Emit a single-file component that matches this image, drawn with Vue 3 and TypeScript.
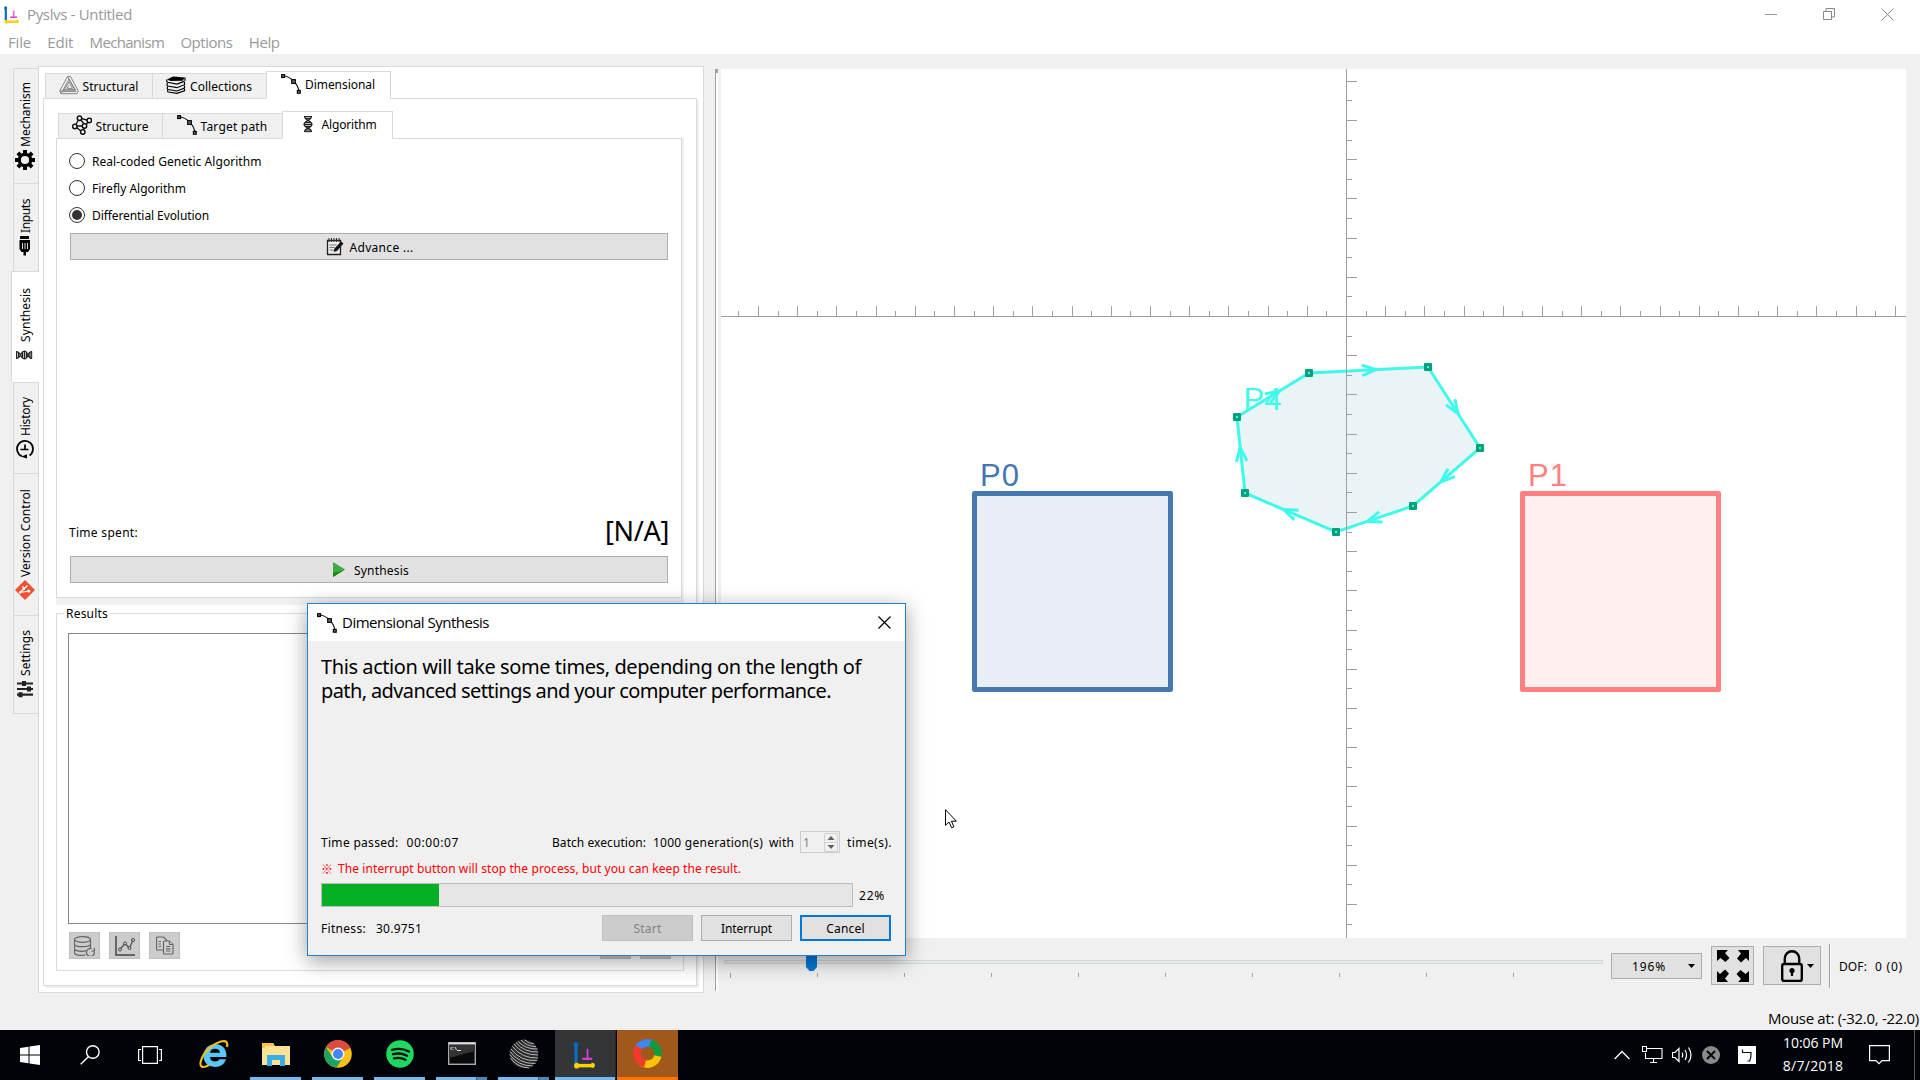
<script setup lang="ts">
import type { Directive } from 'vue'

interface Pt { x: number; y: number }

// Spreads a label's letters so that it takes the given number of pixels along its line.
const vFit: Directive<HTMLElement, number> = {
  mounted(el, binding) {
    const box = el.getBoundingClientRect()
    const length = Math.max(box.width, box.height)
    const count = (el.textContent ?? '').length
    if (count > 0) el.style.letterSpacing = `${(binding.value - length) / count}px`
  },
}

const menus = [
  { label: 'File', width: 23 },
  { label: 'Edit', width: 26 },
  { label: 'Mechanism', width: 74.5 },
  { label: 'Options', width: 52 },
  { label: 'Help', width: 31 },
]

const sideTabs = [
  { label: 'Mechanism', icon: 'gear', height: 115, width: 65 },
  { label: 'Inputs', icon: 'motor', height: 88, width: 34 },
  { label: 'Synthesis', icon: 'dna', height: 111, width: 54, active: true },
  { label: 'History', icon: 'history', height: 91, width: 39 },
  { label: 'Version Control', icon: 'git', height: 142, width: 88 },
  { label: 'Settings', icon: 'sliders', height: 99, width: 46 },
]

const topTabs = [
  { label: 'Structural', icon: 'triangle', tab: 107, width: 56 },
  { label: 'Collections', icon: 'books', tab: 114, width: 62 },
  { label: 'Dimensional', icon: 'path', tab: 125, width: 70, active: true },
]

const subTabs = [
  { label: 'Structure', icon: 'graph', tab: 104, width: 53 },
  { label: 'Target path', icon: 'path', tab: 120, width: 67 },
  { label: 'Algorithm', icon: 'dna', tab: 111, width: 55, active: true },
]

const radios = [
  { label: 'Real-coded Genetic Algorithm', width: 169.5, on: false },
  { label: 'Firefly Algorithm', width: 94, on: false },
  { label: 'Differential Evolution', width: 117, on: true },
]

const axis: Pt = { x: 1346 - 721, y: 316 - 69 }
const step = 19.6
const range = (a: number, b: number) => Array.from({ length: b - a + 1 }, (_, i) => a + i)
const xTicks = range(-31, 28).map(i => ({ p: Math.round(axis.x + i * step) + 0.5, len: i % 2 ? 5 : 10 }))
const yTicks = range(-31, 12).map(i => ({ p: Math.round(axis.y - i * step) + 0.5, len: i % 2 ? 5 : 10 }))

const path: Pt[] = [
  [1237, 417], [1309, 373], [1428, 367], [1480, 448], [1413, 506], [1336, 532], [1245, 493],
].map(([x, y]) => ({ x: x - 721, y: y - 69 }))

const outline = path.map(p => `${p.x},${p.y}`).join(' ')

const arrows = path.map((a, i) => {
  const b = path[(i + 1) % path.length]
  const t = Math.atan2(b.y - a.y, b.x - a.x)
  const tip = { x: (a.x + b.x) / 2 + 7.5 * Math.cos(t), y: (a.y + b.y) / 2 + 7.5 * Math.sin(t) }
  const arm = (d: number) =>
    `${(tip.x - 15 * Math.cos(t + d)).toFixed(1)},${(tip.y - 15 * Math.sin(t + d)).toFixed(1)}`
  return `${arm(0.36)} ${tip.x.toFixed(1)},${tip.y.toFixed(1)} ${arm(-0.36)}`
})

const sliderTicks = range(0, 9).map(i => Math.round(6 + i * 87) + 0.5)
const progress = 22
</script>

<template>
  <svg class="defs" width="0" height="0">
    <symbol id="i-path" viewBox="0 0 20 20">
      <path d="M2 2C9 2 17 9 18 18" fill="none" stroke="#111" stroke-width="1.1" />
      <g fill="#777" stroke="#000" stroke-width="1.2">
        <rect x=".7" y=".7" width="2.8" height="2.8" /><rect x="10.7" y="5.7" width="3.6" height="3.6" /><rect x="16.4" y="16.4" width="2.8" height="2.8" />
      </g>
    </symbol>
    <symbol id="i-triangle" viewBox="0 0 20 20">
      <g fill="none" stroke="#777" stroke-width=".9" stroke-linejoin="round">
        <path d="M8.5 1.5h3L19.3 16l-1.5 2.7H2.2L.7 16z" /><path d="M10 4l6.800 12.200H4.500L10 6.800l3.600 6.600H8.200L10 10.200" /><path d="M8.500 1.500l7.600 13.200H6.200M2.200 18.700L10 4M.7 16h16.500" />
      </g>
    </symbol>
    <symbol id="i-books" viewBox="0 0 20 20">
      <path d="M1 4.500L7 1.500l12 1-2.500 3.200-12 .3z" fill="#000" />
      <g fill="none" stroke="#000" stroke-width="1.200">
        <path d="M1 4.500c-.6 1.500-.3 2.300.5 2.800l9.500 1.800 7.500-3M19 2.800v3" /><path d="M1.500 8c-.8 1.500-.6 2.600.3 3l9 1.700 7.700-3V7" /><path d="M1.800 11.500c-1 1.500-.6 2.500.2 3l9 1.500 7.500-3v-2.500" /><path d="M2 15c-.8 1-.3 1.800.3 2l8.700 1.300 7.500-2.600V14" />
      </g>
    </symbol>
    <symbol id="i-graph" viewBox="0 0 20 20">
      <g fill="none" stroke="#111" stroke-width="1.300">
        <path d="M7.500 3.200L17 5.500M7 4L3 11M8 4l5 6M16 7l-3 4-2 5M4 12l6 5M5 11h7" /><g fill="#fff" stroke-width="1.500"><circle cx="7.500" cy="3.200" r="2.200" /><circle cx="17.300" cy="5.500" r="2.200" /><circle cx="2.800" cy="11.500" r="2.200" /><circle cx="12.500" cy="11" r="2.200" /><circle cx="10.800" cy="17" r="2.200" /></g>
      </g>
    </symbol>
    <symbol id="i-dna" viewBox="0 0 20 20">
      <path d="M6.500 2h7v2.500L11.500 7l2.300 2v3l-2.300 2 2 2.500V18h-7v-1.500l2-2.500-2.300-2V9l2.300-2-2-2.500z" fill="#bbb" />
      <g fill="none" stroke="#222" stroke-width="1.200">
        <path d="M6.500 2C6.500 7 14 6.500 14 10.500S6.500 13 6.500 18M13.500 2c0 5-7.500 4.500-7.500 8.500S13.500 13 13.500 18" /><path d="M6.500 2.500h7M7 4.500h6M7 8.500h6M6 10.500h8M7 12.500h6M7 16h6M6.500 17.700h7" stroke-width="1" />
      </g>
    </symbol>
    <symbol id="i-gear" viewBox="0 0 20 20">
      <g stroke="#000"><circle cx="10" cy="10" r="5.700" fill="none" stroke-width="3.200" /><path d="M10 0v4M10 16v4M0 10h4M16 10h4M2.900 2.900l2.900 2.900M14.200 14.200l2.900 2.900M2.900 17.100l2.900-2.900M14.200 5.800l2.900-2.900" stroke-width="4" /></g>
    </symbol>
    <symbol id="i-motor" viewBox="0 0 20 20">
      <path d="M5 0h9v3H5zM4.500 4h10.500v9l-2 3H6.500l-2-3zM8.500 16h2.500v3.500H8.500z" fill="#000" /><path d="M7.500 7v6M10 7v6M12.500 7v6" stroke="#ddd" stroke-width="1" />
    </symbol>
    <symbol id="i-history" viewBox="0 0 20 20">
      <path d="M14.500 16.500A8 8 0 1 0 7 17.300M10 5.500v5h-4.500M10.500 10.500h3" fill="none" stroke="#000" stroke-width="1.700" /><path d="M6 17.800l6-2.500v4.200z" fill="#000" />
    </symbol>
    <symbol id="i-git" viewBox="0 0 20 20">
      <path d="M10 0l10 10-10 10L0 10z" fill="#f05133" /><path d="M5 12.500l9-1.500M5 12.500L12.500 5.500M9 9L7.500 6" fill="none" stroke="#fff" stroke-width="1.200" /><circle cx="5" cy="12.500" r="1.200" fill="#fff" /><circle cx="13.800" cy="11" r="1.600" fill="#fff" /><circle cx="8.800" cy="8.800" r="1.400" fill="#fff" />
    </symbol>
    <symbol id="i-sliders" viewBox="0 0 20 20">
      <path d="M2 4.500h16M2 10h16M2 15.700h16" stroke="#222" stroke-width="2.200" /><path d="M9 2v5M14 7.500v5M5.500 13.200v5" stroke="#222" stroke-width="4" />
    </symbol>
    <symbol id="i-pyslvs" viewBox="0 0 20 20">
      <path d="M3.500 2v14" stroke="#0a6cc4" stroke-width="2.800" /><circle cx="3.300" cy="2.200" r="2" fill="#0a6cc4" /><path d="M4 17.500h15" stroke="#fdd100" stroke-width="2.600" /><circle cx="4" cy="17.500" r="2.200" fill="#fdd100" /><circle cx="18" cy="17.300" r="1.900" fill="#fdd100" /><path d="M13.500 5v7.500M9 12.500h8.500" stroke="#d63fd6" stroke-width="1.500" />
    </symbol>
  </svg>

  <div class="screen">
    <header class="head">
      <div class="title-row">
        <svg class="app-icon" width="16" height="18" viewBox="0 0 20 20" preserveAspectRatio="none"><use href="#i-pyslvs" /></svg>
        <span v-fit="105" class="segoe">Pyslvs - Untitled</span>
        <div class="win-buttons">
          <svg width="12" height="12"><path d="M0 6.500h12" stroke="#999" /></svg>
          <svg width="12" height="12"><path d="M.5 3.500h8v8h-8zM3 3V.5h8.500V9H9" fill="none" stroke="#888" /></svg>
          <svg width="13" height="13"><path d="M.5.5l12 12M12.500.5l-12 12" stroke="#888" /></svg>
        </div>
      </div>
      <nav class="menu-row">
        <span v-for="m in menus" :key="m.label" v-fit="m.width" class="segoe">{{ m.label }}</span>
      </nav>
    </header>

    <main class="work">
      <div class="side-tabs">
        <div v-for="t in sideTabs" :key="t.label" class="side-tab" :class="{ active: t.active }" :style="{ height: t.height + 'px' }">
          <span v-fit="t.width" class="vertical">{{ t.label }}</span>
          <svg class="tab-icon" :class="{ turned: t.icon === 'dna' }" viewBox="0 0 20 20"><use :href="'#i-' + t.icon" /></svg>
        </div>
      </div>

      <section class="pane outer">
        <div class="tabs">
          <div v-for="t in topTabs" :key="t.label" class="tab" :class="{ active: t.active }" :style="{ width: t.tab + 'px' }">
            <svg class="tab-icon" viewBox="0 0 20 20"><use :href="'#i-' + t.icon" /></svg><span v-fit="t.width">{{ t.label }}</span>
          </div>
        </div>
        <div class="pane middle">
          <div class="tabs">
            <div v-for="t in subTabs" :key="t.label" class="tab" :class="{ active: t.active }" :style="{ width: t.tab + 'px' }">
              <svg class="tab-icon" viewBox="0 0 20 20"><use :href="'#i-' + t.icon" /></svg><span v-fit="t.width">{{ t.label }}</span>
            </div>
          </div>
          <div class="pane algorithm">
            <div v-for="r in radios" :key="r.label" class="radio-row">
              <i class="radio" :class="{ on: r.on }"></i><span v-fit="r.width">{{ r.label }}</span>
            </div>
            <div class="wide-button advance">
              <svg width="18" height="18" viewBox="0 0 18 18"><path d="M1.500 2.500h13v14h-13z" fill="#eee" stroke="#222" stroke-width="1.300" /><path d="M3 0v4M5.500 0v4M8 0v4M10.500 0v4M13 0v4" stroke="#333" /><path d="M3.500 7h7M3.500 9.500h5M3.500 12h4" stroke="#777" /><path d="M7.500 14l1-3.500L15 3.500l2.500 2-6.500 7.500z" fill="#111" /></svg>
              <span v-fit="64">Advance ...</span>
            </div>
            <div class="time-row"><span v-fit="69">Time spent:</span><span v-fit="64" class="elapsed">[N/A]</span></div>
            <div class="wide-button run-button">
              <svg width="12" height="15"><path d="M0 0v15l12-7.500z" fill="#3faa3f" /><path d="M0 15V11q7-1 12-3.500z" fill="#0a8c0a" /></svg>
              <span v-fit="55">Synthesis</span>
            </div>
          </div>
          <div class="band"></div>
          <fieldset class="results">
            <legend><span v-fit="42">Results</span></legend>
            <div class="list"></div>
            <div class="actions">
              <i class="tool"><svg width="21" height="20" viewBox="0 0 21 20"><g fill="none" stroke="#666" stroke-width="1.200"><ellipse cx="8.500" cy="3.500" rx="8" ry="2.800" /><path d="M.5 3.500v13c0 3 8 3.500 11 2.200M16.500 3.500v9M.5 8c0 3.500 16 3.500 16 0M.5 12.500c0 3 9 3.500 11.500 2" /><path d="M20 14.500a4 4 0 1 1-2.500-2M20.300 12v3h-3" /></g></svg></i>
              <i class="tool"><svg width="20" height="20" viewBox="0 0 20 20"><path d="M1 0v19h19" fill="none" stroke="#444" stroke-width="1.500" /><path d="M5 13.500l5-6 4.500 4.500 3.500-8" fill="none" stroke="#555" stroke-width="1.300" /><g fill="#ccc" stroke="#444"><circle cx="5" cy="13.500" r="1.500" /><circle cx="10" cy="7.500" r="1.500" /><circle cx="14.500" cy="12" r="1.500" /><circle cx="18" cy="4" r="1.500" /></g></svg></i>
              <i class="tool"><svg width="18" height="19" viewBox="0 0 18 19"><g fill="#d0d0d0" stroke="#666" stroke-width="1.200"><path d="M1.500 1h6l3 3v10h-9q-1 0-1-1V2q0-1 1-1z" /><path d="M8.500 5h5l3.500 3.500V17q0 1-1 1H8.500q-1 0-1-1V6q0-1 1-1z" /><path d="M13.500 5v3.500H17M2.500 5.500H5M2.500 8H5M2.500 10.500H5M10 10.500h4.500M10 12.800h4.500M10 15h4.500" /></g></svg></i>
              <i class="tool far"></i><i class="tool"></i>
            </div>
          </fieldset>
        </div>
      </section>

      <div class="splitter"><i></i></div>

      <section class="view">
        <svg class="canvas" width="1185" height="869">
          <g stroke="#a0a0a4" stroke-width="1">
            <path :d="`M0 ${axis.y + 0.5}H1185M${axis.x + 0.5} 0V869`" />
            <path v-for="t in xTicks" :key="'x' + t.p" :d="`M${t.p} ${axis.y}v${-t.len}`" />
            <path v-for="t in yTicks" :key="'y' + t.p" :d="`M${axis.x + 1} ${t.p}h${t.len}`" />
          </g>
          <rect x="253.500" y="424.500" width="196" height="196" fill="#e8edf6" stroke="#4478ae" stroke-width="5" stroke-linejoin="round" />
          <text x="259" y="417" class="mark" fill="#4478ae" textLength="39">P0</text>
          <rect x="801.500" y="424.500" width="196" height="196" fill="#ffefef" stroke="#ff8080" stroke-width="5" stroke-linejoin="round" />
          <text x="807" y="417" class="mark" fill="#ff8080" textLength="39">P1</text>
          <polygon :points="outline" fill="#e8f4f5" stroke="#40f9ea" stroke-width="3" />
          <path d="M625.500 296V461" stroke="#a0a0a4" />
          <path v-for="t in yTicks.filter(k => k.p > 296 && k.p < 461)" :key="'p' + t.p" :d="`M626 ${t.p}h${t.len}`" stroke="#a0a0a4" />
          <polyline v-for="a in arrows" :key="a" :points="a" fill="none" stroke="#40f9ea" stroke-width="3" />
          <g v-for="p in path" :key="p.x">
            <rect :x="p.x - 4" :y="p.y - 4" width="8" height="8" rx="1" fill="#04a27a" /><rect :x="p.x - 1" :y="p.y - 1" width="2" height="2" fill="#40f9ea" />
          </g>
          <text x="522.500" y="341" class="mark" fill="#40f9ea" textLength="38">P4</text>
        </svg>
        <div class="controls">
          <svg class="slider" width="880" height="55">
            <rect x=".5" y="22.500" width="878" height="3" fill="#e7eaea" stroke="#d6d9d9" />
            <path v-for="(t, i) in sliderTicks" :key="t" :d="`M${t} 35v${i ? 4 : 5}`" stroke="#a5a597" />
            <path d="M82 10h11v19l-3.500 4h-4L82 29z" fill="#0078d7" />
          </svg>
          <div class="box percent"><span v-fit="34">196%</span><svg width="7" height="4"><path d="M0 0h7L3.500 4z" /></svg></div>
          <div class="box fit-view">
            <svg width="32" height="32" viewBox="0 0 32 32"><path v-for="r in [0, 90, 180, 270]" :key="r" :transform="`rotate(${r} 16 16)`" d="M0 0h11L8 3l4.500 5L8.500 12 3.500 8 0 11z" /></svg>
          </div>
          <div class="box lock">
            <svg width="22" height="32" viewBox="0 0 22 32"><rect x="1.200" y="14" width="19.600" height="17" rx="2" fill="none" stroke="#000" stroke-width="2.400" /><path d="M3.800 14V8.500a7.200 7.200 0 0 1 14.400 0V14" fill="none" stroke="#000" stroke-width="2.400" /><circle cx="11" cy="20.500" r="2.600" /><path d="M11 20v6" stroke="#000" stroke-width="2.200" /></svg>
            <svg class="lock-arrow" width="7" height="4"><path d="M0 0h7L3.500 4z" /></svg>
          </div>
          <div class="divider"></div>
          <span v-fit="28">DOF:</span><span v-fit="28" class="dof">0 (0)</span>
        </div>
      </section>
    </main>

    <div class="status"><span v-fit="151" class="segoe">Mouse at: (-32.0, -22.0)</span></div>

    <footer class="taskbar">
      <svg class="start" width="20" height="20"><path d="M0 3l8.500-1.200v7.700H0zM9.500 1.600L20 0v9.500H9.500zM0 10.500h8.500v7.700L0 17zM9.500 10.500H20V20L9.500 18.400z" fill="#fff" /></svg>
      <svg class="search" width="20" height="20"><circle cx="12.800" cy="7" r="6.300" fill="none" stroke="#fff" stroke-width="1.400" /><path d="M8.300 11.700L.7 19.300" stroke="#fff" stroke-width="1.400" /></svg>
      <svg class="tasks" width="24" height="20"><path d="M4.600 1.600h14.800v16.800H4.600zM3 4.500H.6v11H3M21 4.500h2.400v11H21" fill="none" stroke="#fff" stroke-width="1.200" /></svg>
      <div class="apps">
        <div class="app">
          <svg width="30" height="30" viewBox="0 0 30 30"><path fill-rule="evenodd" d="M27.500 18H11q.5 4.500 5 4.500 3.200 0 4.500-2.200h6.500Q24.500 28 16 28 4.500 27 4.500 16.500 5.500 5.500 16 5q11.500.5 11.500 13zM11 13.800h10q-.5-4-5-4-4.200 0-5 4z" fill="#5ac8f5" /><path d="M28 8q1.500-7.500-6-5.500Q12 5.500 5 15-.5 25 2.500 27.500 5 29 10 26" fill="none" stroke="#f5bd1c" stroke-width="2.200" /></svg>
        </div>
        <div class="app run">
          <svg width="28" height="24" viewBox="0 0 28 24"><path d="M0 1h11l2 3h15v19H0z" fill="#ffe293" /><path d="M0 1h11l1.500 3H3v2H0z" fill="#f5c445" /><path d="M5 24V13h18v11h-5v-6h-8v6z" fill="#38b0e6" /></svg>
        </div>
        <div class="app run">
          <svg width="28" height="28" viewBox="0 0 28 28"><circle cx="14" cy="14" r="13.800" fill="#fbc116" /><path d="M14 14L2 7A13.800 13.800 0 0 1 26.500 8z" fill="#dd4b3e" /><path d="M2 7A13.800 13.800 0 0 0 12.500 27.700L19 17 8.500 17z" fill="#1da462" /><circle cx="14" cy="14" r="6.500" fill="#f4f4f4" /><circle cx="14" cy="14" r="5" fill="#4587f3" /></svg>
        </div>
        <div class="app run">
          <svg width="28" height="28" viewBox="0 0 28 28"><circle cx="14" cy="14" r="13.800" fill="#1fd862" /><path d="M6 9.800q9-2.500 17 1.700M7 14.200q7.500-2 14 1.500M8 18.400q6-1.500 11.500 1.400" fill="none" stroke="#00120a" stroke-width="2.300" stroke-linecap="round" /></svg>
        </div>
        <div class="app run stacked">
          <svg width="28" height="23" viewBox="0 0 28 23"><rect x=".7" y=".7" width="26.600" height="21.600" fill="#0a0a0a" stroke="#aaa" stroke-width="1.400" /><path d="M1 1.500h26" stroke="#ddd" stroke-width="2" /><path d="M1 16L27 9V3H1z" fill="#333" /><path d="M3 5v3M5 5v1M5 7v1M7 5l1.500 3M9 8.500h4" stroke="#ddd" /></svg>
        </div>
        <div class="app run stacked">
          <svg width="30" height="30" viewBox="0 0 30 30"><circle cx="15" cy="15" r="14.500" fill="#2a2a2a" /><g fill="none" stroke="#c8c8c8" stroke-width=".9"><path d="M5 5q8 11 24 11M3.500 7.500q9 12 25.500 11.500M2 10q9 12.500 26 11.500M7 3.500q8 10 22 9.500M9 2.500q8 8 19.500 7.500M12 1q6 6.500 15 6.500M15.500.8q4 4 9.500 4M1 12.500q9 12.500 25.500 12M.8 15.500q8 11.500 23 11.500M1.500 19q6 9 18.500 10" /></g></svg>
        </div>
        <div class="app run pyslvs"><svg width="23" height="27" viewBox="0 0 20 20" preserveAspectRatio="none"><use href="#i-pyslvs" /></svg></div>
        <div class="app run orange">
          <svg width="29" height="29" viewBox="0 0 29 29"><g fill="none" stroke-width="7.500"><path d="M4.200 12A10.500 10.500 0 0 1 21 6.200" stroke="#4285f4" /><path d="M17 4.300A10.500 10.500 0 0 1 22.800 21" stroke="#0f9d3c" /><path d="M24.800 17A10.500 10.500 0 0 1 8 22.800" stroke="#fdc208" /><path d="M12 24.700A10.500 10.500 0 0 1 6.200 8.200" stroke="#f23a2c" /></g></svg>
        </div>
      </div>
      <div class="tray">
        <svg width="16" height="10"><path d="M.6 9L8 1.500 15.400 9" fill="none" stroke="#fff" stroke-width="1.300" /></svg>
        <svg class="net" width="21" height="18"><path d="M5 2.500h15v10H3.500V7M8 16.500h7M11.500 12.500v4M.5.5h4v5h-4z" fill="none" stroke="#fff" stroke-width="1.100" /></svg>
        <svg class="vol" width="21" height="18"><path d="M.5 6.500H3l4-4v13l-4-4H.5zM10 6.500q1.500 2.500 0 5M13 4q3 5 0 10M16.500 1.500q5 7.500 0 15" fill="none" stroke="#fff" stroke-width="1.200" /></svg>
        <svg class="off" width="18" height="18"><circle cx="9" cy="9" r="9" fill="#8a8a8a" /><path d="M5 5l8 8M13 5l-8 8" stroke="#000" stroke-width="1.800" /></svg>
        <svg class="ime" width="18" height="18"><path d="M0 0h18v18H0z" fill="#fff" /><path d="M4.500 3.500V7M4.500 6.500H13q.3 5-1.300 8.500H9.500" fill="none" stroke="#111" stroke-width="1.200" /></svg>
        <div class="clock"><span v-fit="60">10:06 PM</span><span v-fit="60.500">8/7/2018</span></div>
        <svg class="note" width="21" height="20"><path d="M.6.600h19.800v15H13l-3 3-3-3H.6z" fill="none" stroke="#fff" stroke-width="1.200" /></svg>
        <div class="peek"></div>
      </div>
    </footer>

    <div class="dialog">
      <div class="dialog-title">
        <svg width="20" height="20" viewBox="0 0 20 20"><use href="#i-path" /></svg>
        <span v-fit="147" class="segoe">Dimensional Synthesis</span>
        <svg class="close" width="13" height="13"><path d="M.5.5l12 12M12.500.5l-12 12" stroke="#000" stroke-width="1.200" /></svg>
      </div>
      <div class="dialog-body">
        <div class="message">
          <span v-fit="540">This action will take some times, depending on the length of</span>
          <span v-fit="510">path, advanced settings and your computer performance.</span>
        </div>
        <div class="line batch">
          <span v-fit="77.500">Time passed:</span><span v-fit="52.500" class="passed">00:00:07</span>
          <span v-fit="94" class="push">Batch execution:</span><span v-fit="110" class="generations">1000 generation(s)</span><span v-fit="25">with</span>
          <div class="spin"><span>1</span><svg width="14" height="19"><path d="M.5.5h13v18H.5zM0 9.500h14" fill="none" stroke="#d2d2d2" /><path d="M3.500 7h7L7 3zM3.500 12h7L7 16z" fill="#606060" /></svg></div>
          <span v-fit="45">time(s).</span>
        </div>
        <div class="line warn"><span class="cjk">※</span><span v-fit="403">The interrupt button will stop the process, but you can keep the result.</span></div>
        <div class="line bar-row">
          <div class="bar"><i :style="{ width: progress + '%' }"></i></div><span v-fit="26">22%</span>
        </div>
        <div class="line foot">
          <span v-fit="45">Fitness:</span><span v-fit="46" class="fitness">30.9751</span>
          <div class="btn disabled push"><span v-fit="28">Start</span></div>
          <div class="btn"><span v-fit="51">Interrupt</span></div>
          <div class="btn primary"><span v-fit="38.500">Cancel</span></div>
        </div>
      </div>
    </div>

    <svg class="cursor" width="13" height="20"><path d="M.5.700v15.600l3.500-3.300 2.600 5.800 2.300-1L6.400 12.200h5z" fill="#fff" stroke="#000" /></svg>
  </div>
</template>

<style>
body { margin: 0; background: #f0f0f0; }
</style>

<style scoped>
.defs { position: absolute; }
.screen { position: relative; width: 1920px; height: 1080px; overflow: hidden; display: flex; flex-direction: column; background: #f0f0f0; color: #000; font: 12px/16px "Noto Sans", "Noto Sans CJK TC", sans-serif; }
.screen * { box-sizing: border-box; }
.screen svg { display: block; flex: none; }
.screen span { white-space: nowrap; flex: none; }
.segoe { font: 15px/20px "Open Sans", sans-serif; }
.tab span, .radio-row span, .wide-button span, .line span, .controls span { padding-top: 2px; }

.head { height: 54px; background: #fff; color: #999; flex: none; }
.title-row { display: flex; align-items: center; height: 29px; padding-left: 3px; }
.title-row .segoe { margin-left: 8px; padding-bottom: 2px; }
.win-buttons { margin-left: auto; margin-right: 26px; padding-bottom: 1px; display: flex; align-items: center; gap: 46px; }
.menu-row { display: flex; gap: 16.3px; padding: 3px 0 0 8px; }

.work { display: flex; align-items: flex-start; height: 951px; }
.side-tabs { width: 27px; margin-left: 11px; padding-top: 14px; flex: none; }
.side-tab { margin-left: 2px; width: 25px; display: flex; flex-direction: column; align-items: center; justify-content: center; gap: 3px; border: 1px solid #d9d9d9; border-width: 1px 0 0 1px; padding-bottom: 1px; }
.side-tab:last-child { border-bottom-width: 1px; padding-bottom: 0; }
.side-tab.active { width: 28px; margin-left: 0; background: #fff; position: relative; z-index: 1; padding-right: 3px; }
.side-tab:not(.active) { padding-right: 3px; }
.vertical { writing-mode: vertical-rl; transform: rotate(180deg); margin-left: 3px; }
.tab-icon { width: 20px; height: 20px; }
.turned { transform: rotate(-90deg); }

.pane { background: #fff; border: 1px solid #d9d9d9; }
.outer { width: 666px; height: 927px; margin-top: 12px; padding: 4px 0 0 4px; flex: none; }
.tabs { display: flex; align-items: flex-end; height: 27px; margin-left: 2px; }
.tab { display: flex; align-items: center; justify-content: center; gap: 4px; height: 25px; background: #f0f0f0; border: 1px solid #d9d9d9; border-width: 1px 0 0 1px; flex: none; padding: 0 1px 2px 0; }
.tab span { padding-top: 3px; }
.tab.active { height: 28px; margin-bottom: -1px; background: #fff; border-right-width: 1px; padding-bottom: 4px; position: relative; }
.middle { width: 654px; height: 888px; box-shadow: 2px 2px 0 #f0f0f0; padding: 12px 0 0 12px; }
.algorithm { width: 626px; height: 460px; box-shadow: 2px 0 0 #f0f0f0; padding: 14px 13px; display: flex; flex-direction: column; }
.radio-row { display: flex; align-items: center; height: 16px; margin: 0 0 11px -1px; gap: 7px; }
.radio { width: 16px; height: 16px; border: 1px solid #333; border-radius: 50%; padding: 2px; flex: none; }
.radio.on::before { content: ""; display: block; width: 10px; height: 10px; border-radius: 50%; background: #333; }
.wide-button { height: 27px; display: flex; align-items: center; justify-content: center; gap: 7px; background: #e1e1e1; border: 1px solid #adadad; flex: none; }
.wide-button.advance { margin-top: -1px; gap: 6px; padding-left: 1px; }
.time-row { margin-top: auto; margin-bottom: 10px; display: flex; align-items: center; justify-content: space-between; height: 26px; margin-left: -1px; margin-right: -1px; }
.elapsed { font-size: 27px; line-height: 26px; padding-bottom: 4px; }
.wide-button.run-button { gap: 9px; padding-left: 4px; }
.band { width: 628px; height: 7px; background: #f0f0f0; }
.results { width: 628px; height: 366px; margin: 0; padding: 8px 12px 0 11px; border: 1px solid #dcdcdc; display: block; min-width: 0; }
.results legend { padding: 1px 2px 0; margin-left: -4px; line-height: 16px; }
.list { height: 291px; border: 1px solid #828790; margin-top: 3px; }
.actions { display: flex; gap: 9px; margin: 8px 0 0 1px; }
.tool { width: 31px; height: 27px; display: flex; align-items: center; justify-content: center; background: #ccc; border: 1px solid #bfbfbf; }
.tool.far { margin-left: auto; }

.splitter { width: 3px; height: 922px; margin: 15px 3px 0 11px; background: #fff; border-left: 1px solid #a0a0a0; flex: none; }
.splitter i { display: block; width: 2px; height: 4px; background: #a0a0a0; }
.view { width: 1199px; margin-top: 15px; }
.canvas { background: #fff; }
.mark { font: 31px "Liberation Sans", sans-serif; }
.controls { height: 55px; padding-left: 3px; display: flex; align-items: center; }
.box { background: #e1e1e1; border: 1px solid #adadad; display: flex; align-items: center; flex: none; }
.percent { width: 91px; height: 26px; margin-left: 7px; padding: 0 6px 0 20px; justify-content: space-between; }
.fit-view { width: 43px; height: 39px; margin-left: 9px; justify-content: center; }
.lock { width: 58px; height: 39px; margin-left: 9px; padding-left: 17px; }
.lock-arrow { margin-left: 4px; }
.divider { width: 2px; height: 44px; margin: 0 8px; border-left: 1px solid #a0a0a0; background: #fff; flex: none; }
.dof { margin-left: 8px; }

.status { height: 25px; display: flex; justify-content: flex-end; padding: 3px 1px 0 0; flex: none; }

.taskbar { height: 50px; background: #000307; display: flex; align-items: center; color: #fff; flex: none; }
.start { margin-left: 20px; }
.search { margin-left: 40px; }
.tasks { margin-left: 38px; }
.apps { display: flex; margin-left: 21px; align-self: stretch; gap: 1px; }
.app { width: 61px; display: flex; align-items: center; justify-content: center; padding-bottom: 3px; position: relative; }
.app.run::after { content: ""; position: absolute; left: 5px; right: 5px; bottom: 0; height: 3px; background: #76b9ed; }
.app.stacked::after { background: linear-gradient(90deg, #76b9ed 40px, #24425c 40px, #4f86b4 41px); }
.app.pyslvs { background: #333639; border-right: 1px solid #24272a; padding-right: 3px; padding-bottom: 0; }
.app.pyslvs::after, .app.orange::after { left: 0; right: 0; }
.app.orange { background: #a0581c; }
.app.orange::after { background: #ff7200; }
.tray { margin-left: auto; display: flex; align-items: center; align-self: stretch; }
.net { margin-left: 12px; }
.vol { margin-left: 9px; }
.off { margin-left: 9px; }
.ime { margin-left: 18px; }
.clock { width: 62px; margin-left: 26px; display: flex; flex-direction: column; align-items: center; gap: 3px; font: 14px/20px "Open Sans", sans-serif; padding-bottom: 1px; }
.note { margin-left: 25px; }
.peek { width: 6px; margin-left: 24px; align-self: stretch; border-left: 1px solid #55585b; }

.dialog { position: absolute; left: 307px; top: 603px; width: 599px; height: 353px; background: #f0f0f0; border: 1px solid #1883d7; box-shadow: 0 5px 20px rgba(0, 0, 0, .38); }
.dialog-title { height: 37px; background: #fff; display: flex; align-items: center; padding: 0 14px 0 9px; }
.dialog-title .segoe { margin-left: 5px; padding-bottom: 2px; }
.close { margin-left: auto; }
.dialog-body { padding: 14px 13px 0 13px; }
.message { font-size: 20px; line-height: 24px; height: 176px; }
.message span { display: inline-block; }
.line { display: flex; align-items: center; }
.push { margin-left: auto; }
.batch { height: 22px; }
.passed { margin-left: 8px; }
.generations { margin: 0 6px 0 7px; }
.spin { width: 40px; height: 22px; margin: 0 7px 0 6px; padding: 0 1px 0 2px; border: 1px solid #ccc; color: #838383; display: flex; align-items: center; justify-content: space-between; }
.warn { color: #f00; height: 30px; }
.cjk { font: 12px/16px "Noto Sans CJK TC", sans-serif; width: 17px; }
.bar-row { height: 24px; }
.bar { width: 532px; height: 24px; background: #e6e6e6; border: 1px solid #bcbcbc; margin-right: 6px; }
.bar i { display: block; height: 100%; background: #06b025; }
.foot { margin-top: 8px; padding-right: 1px; gap: 8px; }
.fitness { margin-left: 2px; }
.btn { width: 91px; height: 26px; display: flex; align-items: center; justify-content: center; background: #e1e1e1; border: 1px solid #adadad; }
.btn.disabled { background: #ccc; border-color: #bfbfbf; color: #838383; }
.btn.primary { border: 2px solid #0078d7; }
.cursor { position: absolute; left: 945px; top: 809px; }
</style>
